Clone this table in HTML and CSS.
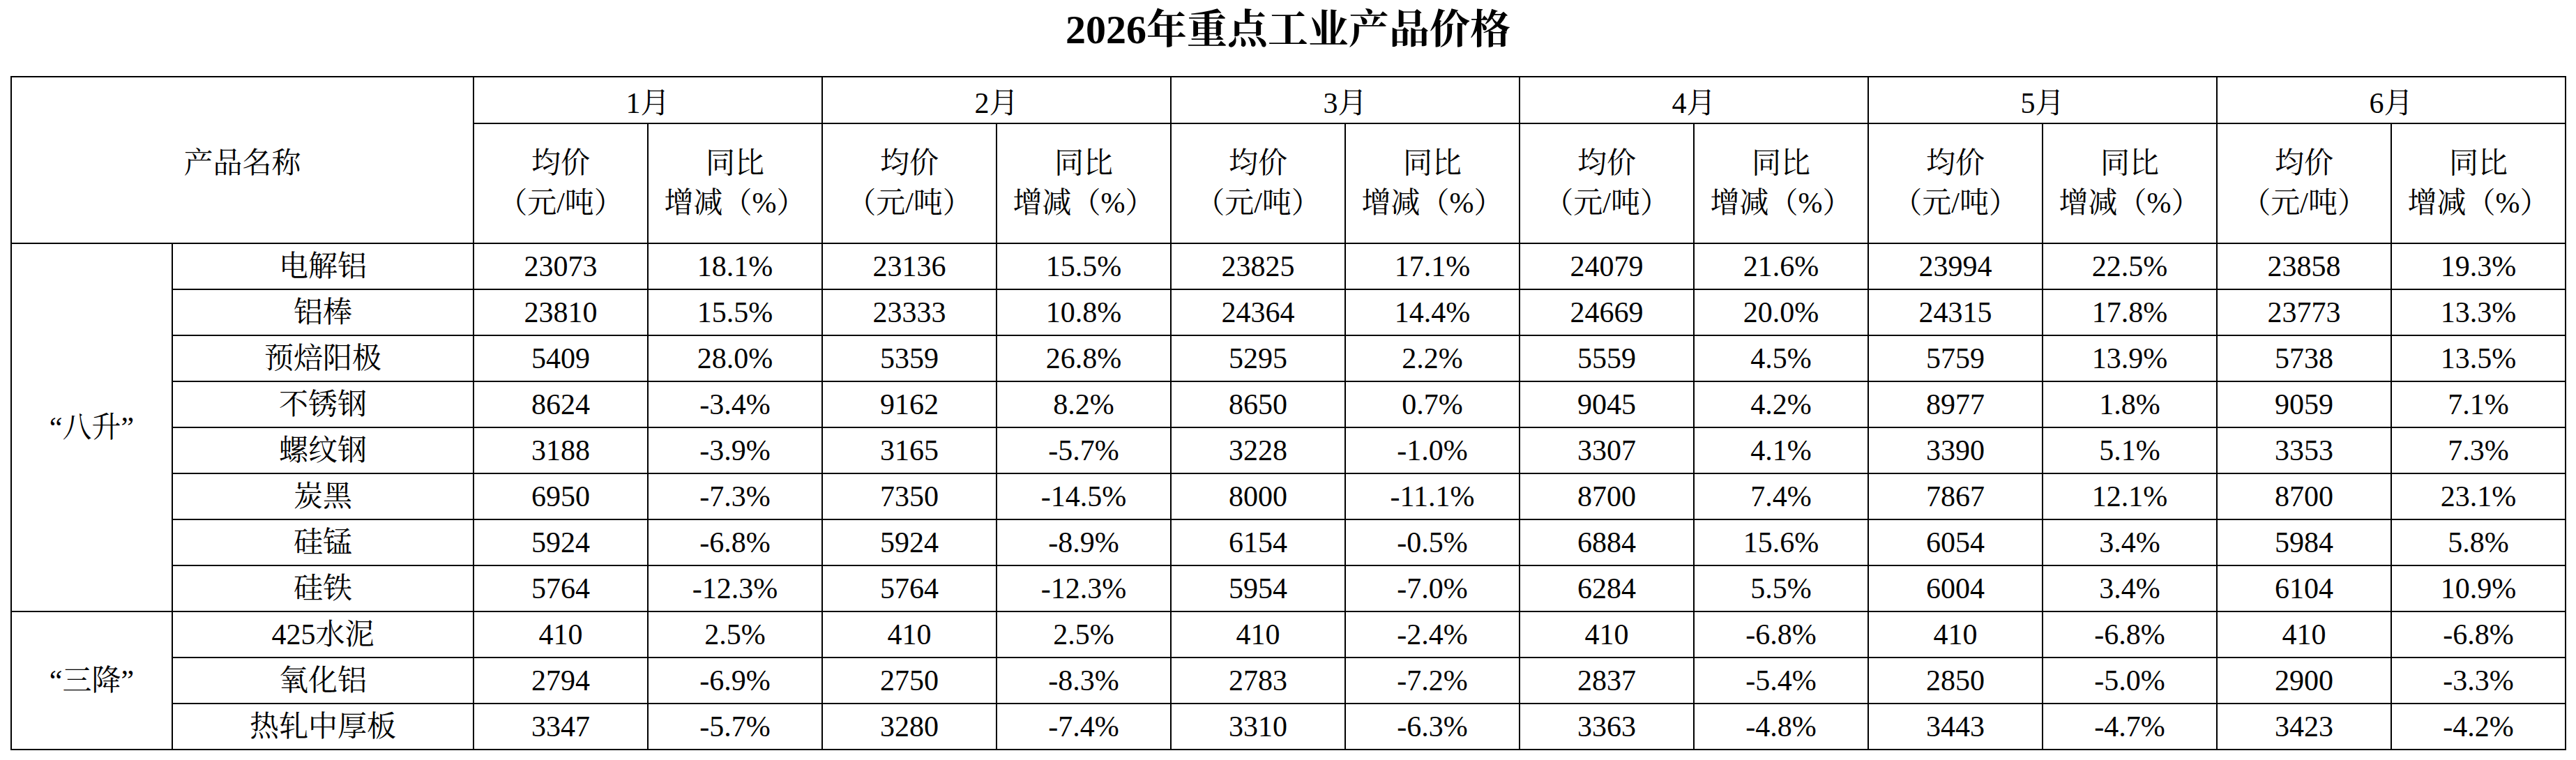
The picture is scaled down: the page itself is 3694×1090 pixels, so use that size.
FILE: index.html
```html
<!DOCTYPE html>
<html lang="zh-CN">
<head>
<meta charset="utf-8">
<title>2026年重点工业产品价格</title>
<link rel="stylesheet" href="styles.css">
</head>
<body>
<div class="page">
  <h1 class="title">2026年重点工业产品价格</h1>
  <table class="price-table">
    <colgroup>
      <col class="c-group"><col class="c-name">
      <col class="c-val"><col class="c-val"><col class="c-val"><col class="c-val">
      <col class="c-val"><col class="c-val"><col class="c-val"><col class="c-val">
      <col class="c-val"><col class="c-val"><col class="c-val"><col class="c-val">
    </colgroup>
    <thead>
      <tr class="h1">
        <th colspan="2" rowspan="2">产品名称</th>
        <th colspan="2">1月</th><th colspan="2">2月</th><th colspan="2">3月</th>
        <th colspan="2">4月</th><th colspan="2">5月</th><th colspan="2">6月</th>
      </tr>
      <tr class="h2">
        <th>均价<br>（元/吨）</th><th>同比<br>增减（%）</th>
        <th>均价<br>（元/吨）</th><th>同比<br>增减（%）</th>
        <th>均价<br>（元/吨）</th><th>同比<br>增减（%）</th>
        <th>均价<br>（元/吨）</th><th>同比<br>增减（%）</th>
        <th>均价<br>（元/吨）</th><th>同比<br>增减（%）</th>
        <th>均价<br>（元/吨）</th><th>同比<br>增减（%）</th>
      </tr>
    </thead>
    <tbody>
      <tr><td class="group" rowspan="8">“八升”</td><td>电解铝</td><td>23073</td><td>18.1%</td><td>23136</td><td>15.5%</td><td>23825</td><td>17.1%</td><td>24079</td><td>21.6%</td><td>23994</td><td>22.5%</td><td>23858</td><td>19.3%</td></tr>
      <tr><td>铝棒</td><td>23810</td><td>15.5%</td><td>23333</td><td>10.8%</td><td>24364</td><td>14.4%</td><td>24669</td><td>20.0%</td><td>24315</td><td>17.8%</td><td>23773</td><td>13.3%</td></tr>
      <tr><td>预焙阳极</td><td>5409</td><td>28.0%</td><td>5359</td><td>26.8%</td><td>5295</td><td>2.2%</td><td>5559</td><td>4.5%</td><td>5759</td><td>13.9%</td><td>5738</td><td>13.5%</td></tr>
      <tr><td>不锈钢</td><td>8624</td><td>-3.4%</td><td>9162</td><td>8.2%</td><td>8650</td><td>0.7%</td><td>9045</td><td>4.2%</td><td>8977</td><td>1.8%</td><td>9059</td><td>7.1%</td></tr>
      <tr><td>螺纹钢</td><td>3188</td><td>-3.9%</td><td>3165</td><td>-5.7%</td><td>3228</td><td>-1.0%</td><td>3307</td><td>4.1%</td><td>3390</td><td>5.1%</td><td>3353</td><td>7.3%</td></tr>
      <tr><td>炭黑</td><td>6950</td><td>-7.3%</td><td>7350</td><td>-14.5%</td><td>8000</td><td>-11.1%</td><td>8700</td><td>7.4%</td><td>7867</td><td>12.1%</td><td>8700</td><td>23.1%</td></tr>
      <tr><td>硅锰</td><td>5924</td><td>-6.8%</td><td>5924</td><td>-8.9%</td><td>6154</td><td>-0.5%</td><td>6884</td><td>15.6%</td><td>6054</td><td>3.4%</td><td>5984</td><td>5.8%</td></tr>
      <tr><td>硅铁</td><td>5764</td><td>-12.3%</td><td>5764</td><td>-12.3%</td><td>5954</td><td>-7.0%</td><td>6284</td><td>5.5%</td><td>6004</td><td>3.4%</td><td>6104</td><td>10.9%</td></tr>
      <tr><td class="group" rowspan="3">“三降”</td><td>425水泥</td><td>410</td><td>2.5%</td><td>410</td><td>2.5%</td><td>410</td><td>-2.4%</td><td>410</td><td>-6.8%</td><td>410</td><td>-6.8%</td><td>410</td><td>-6.8%</td></tr>
      <tr><td>氧化铝</td><td>2794</td><td>-6.9%</td><td>2750</td><td>-8.3%</td><td>2783</td><td>-7.2%</td><td>2837</td><td>-5.4%</td><td>2850</td><td>-5.0%</td><td>2900</td><td>-3.3%</td></tr>
      <tr><td>热轧中厚板</td><td>3347</td><td>-5.7%</td><td>3280</td><td>-7.4%</td><td>3310</td><td>-6.3%</td><td>3363</td><td>-4.8%</td><td>3443</td><td>-4.7%</td><td>3423</td><td>-4.2%</td></tr>
    </tbody>
  </table>
</div>
</body>
</html>
```

FILE: styles.css
```css
html, body {
  margin: 0;
  padding: 0;
  background: #ffffff;
}

body {
  color: #000000;
  font-family: "Liberation Serif", "Noto Serif CJK SC", "Noto Sans CJK SC", serif;
}

.page {
  padding: 0 15px;
}

.title {
  margin: 0;
  height: 109px;
  box-sizing: border-box;
  padding-top: 14px;
  font-size: 58px;
  line-height: 58px;
  font-weight: bold;
  text-align: center;
  letter-spacing: 0;
}

.price-table {
  border-collapse: collapse;
  table-layout: fixed;
  width: 3664px;
  border: 2px solid #000000;
}

.c-group { width: 231px; }
.c-name { width: 432px; }
.c-val { width: 250px; }

.price-table th,
.price-table td {
  border: 2px solid #000000;
  padding: 0;
  text-align: center;
  vertical-align: middle;
  font-size: 42px;
  font-weight: normal;
  white-space: nowrap;
}

.price-table .h1 { height: 67px; }
.price-table .h2 { height: 172px; }
.price-table .h2 th { line-height: 57px; }

.price-table tbody tr { height: 66px; }
.price-table tbody td { line-height: 44px; }
```
